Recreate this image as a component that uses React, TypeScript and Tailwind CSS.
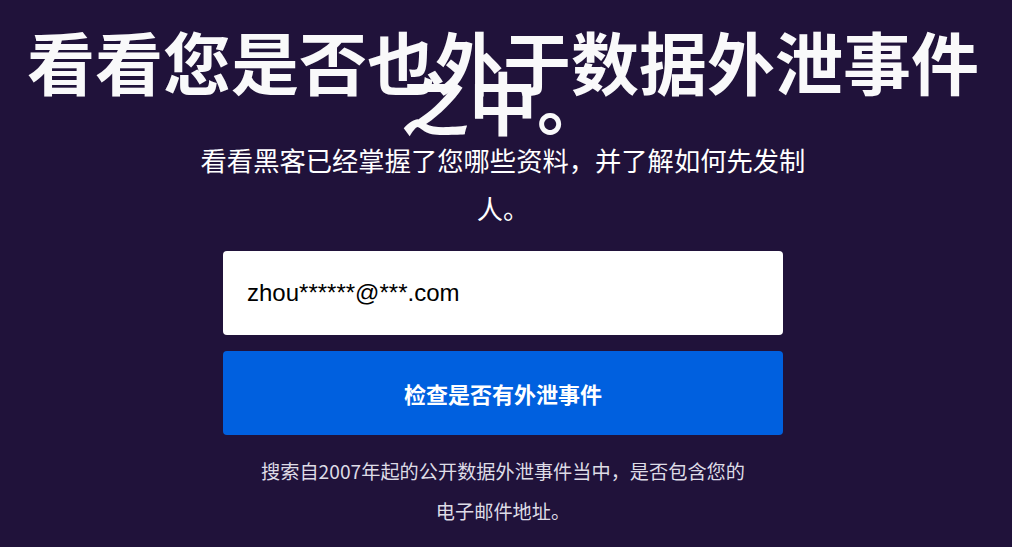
const cjk = '"Noto Sans CJK SC", "Noto Sans", sans-serif'

export default function App() {
  return (
    <main
      className="min-h-[547px] w-full bg-[#20123a] pr-[6px] text-[#f9f9fa] flex flex-col items-center"
      style={{ fontFamily: cjk }}
    >
      <h1 className="mt-[41px] w-full text-center text-[68px] leading-[40px] font-bold">
        看看您是否也外于数据外泄事件之中。
      </h1>

      <p className="mt-[15px] max-w-[624px] text-center text-[26.3px] leading-[48px] text-white">
        看看黑客已经掌握了您哪些资料，并了解如何先发制人。
      </p>

      <form className="mt-[19px] w-[560px] flex flex-col gap-4" onSubmit={(e) => e.preventDefault()}>
        <input
          type="email"
          defaultValue="zhou******@***.com"
          className="h-[84px] w-full rounded bg-white px-6 text-[24px] text-black outline-none"
          style={{ fontFamily: '"Liberation Sans", Arial, sans-serif' }}
        />
        <button
          type="submit"
          className="h-[84px] w-full rounded bg-[#0060df] text-[22px] font-bold text-white"
        >
          检查是否有外泄事件
        </button>
      </form>

      <p className="mt-4 max-w-[486px] text-center text-[19.2px] leading-[40px] text-[#dedce6]">
        搜索自2007年起的公开数据外泄事件当中，是否包含您的电子邮件地址。
      </p>
    </main>
  )
}
